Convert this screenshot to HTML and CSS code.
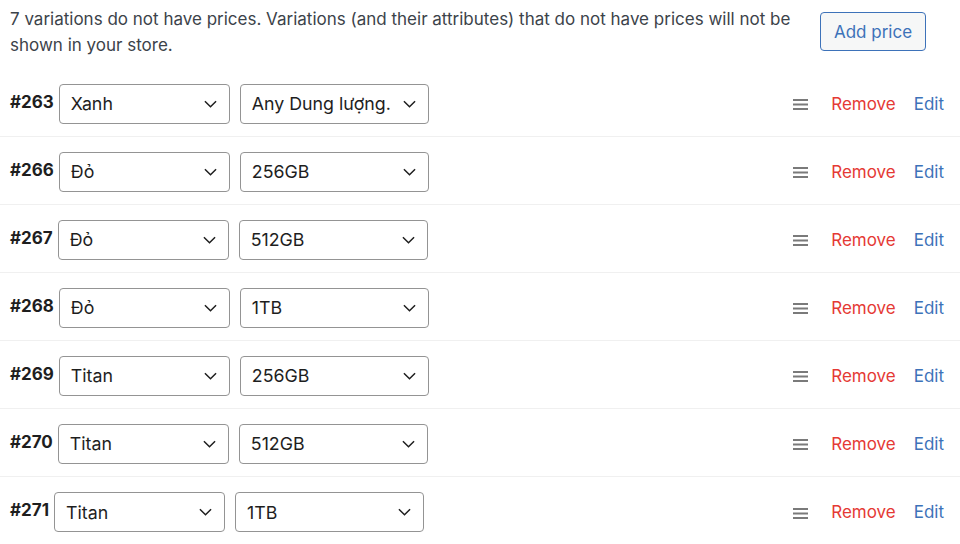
FILE: index.html
```html
<!DOCTYPE html>
<html lang="vi">
<head>
<meta charset="utf-8">
<title>Variations</title>
<link rel="stylesheet" href="styles.css">
</head>
<body>
<div class="notice">
  <p class="notice-text">7 variations do not have prices. Variations (and their attributes) that do not have prices will not be shown in your store.</p>
  <button class="btn-add">Add price</button>
</div>
<ul class="variations">
  <li class="row">
    <span class="vid">#263</span>
    <div class="select s1"><span>Xanh</span><svg viewBox="0 0 14 8" class="chev"><path d="M1 1l6 6 6-6"/></svg></div>
    <div class="select s2"><span>Any Dung lượng.</span><svg viewBox="0 0 14 8" class="chev"><path d="M1 1l6 6 6-6"/></svg></div>
    <div class="actions">
      <svg class="drag" viewBox="0 0 15 11"><rect y="0" width="15" height="2"/><rect y="4.5" width="15" height="2"/><rect y="9" width="15" height="2"/></svg>
      <a class="remove">Remove</a><a class="edit">Edit</a>
    </div>
  </li>
  <li class="row">
    <span class="vid">#266</span>
    <div class="select s1"><span>Đỏ</span><svg viewBox="0 0 14 8" class="chev"><path d="M1 1l6 6 6-6"/></svg></div>
    <div class="select s2"><span>256GB</span><svg viewBox="0 0 14 8" class="chev"><path d="M1 1l6 6 6-6"/></svg></div>
    <div class="actions">
      <svg class="drag" viewBox="0 0 15 11"><rect y="0" width="15" height="2"/><rect y="4.5" width="15" height="2"/><rect y="9" width="15" height="2"/></svg>
      <a class="remove">Remove</a><a class="edit">Edit</a>
    </div>
  </li>
  <li class="row">
    <span class="vid">#267</span>
    <div class="select s1"><span>Đỏ</span><svg viewBox="0 0 14 8" class="chev"><path d="M1 1l6 6 6-6"/></svg></div>
    <div class="select s2"><span>512GB</span><svg viewBox="0 0 14 8" class="chev"><path d="M1 1l6 6 6-6"/></svg></div>
    <div class="actions">
      <svg class="drag" viewBox="0 0 15 11"><rect y="0" width="15" height="2"/><rect y="4.5" width="15" height="2"/><rect y="9" width="15" height="2"/></svg>
      <a class="remove">Remove</a><a class="edit">Edit</a>
    </div>
  </li>
  <li class="row">
    <span class="vid">#268</span>
    <div class="select s1"><span>Đỏ</span><svg viewBox="0 0 14 8" class="chev"><path d="M1 1l6 6 6-6"/></svg></div>
    <div class="select s2"><span>1TB</span><svg viewBox="0 0 14 8" class="chev"><path d="M1 1l6 6 6-6"/></svg></div>
    <div class="actions">
      <svg class="drag" viewBox="0 0 15 11"><rect y="0" width="15" height="2"/><rect y="4.5" width="15" height="2"/><rect y="9" width="15" height="2"/></svg>
      <a class="remove">Remove</a><a class="edit">Edit</a>
    </div>
  </li>
  <li class="row">
    <span class="vid">#269</span>
    <div class="select s1"><span>Titan</span><svg viewBox="0 0 14 8" class="chev"><path d="M1 1l6 6 6-6"/></svg></div>
    <div class="select s2"><span>256GB</span><svg viewBox="0 0 14 8" class="chev"><path d="M1 1l6 6 6-6"/></svg></div>
    <div class="actions">
      <svg class="drag" viewBox="0 0 15 11"><rect y="0" width="15" height="2"/><rect y="4.5" width="15" height="2"/><rect y="9" width="15" height="2"/></svg>
      <a class="remove">Remove</a><a class="edit">Edit</a>
    </div>
  </li>
  <li class="row">
    <span class="vid">#270</span>
    <div class="select s1"><span>Titan</span><svg viewBox="0 0 14 8" class="chev"><path d="M1 1l6 6 6-6"/></svg></div>
    <div class="select s2"><span>512GB</span><svg viewBox="0 0 14 8" class="chev"><path d="M1 1l6 6 6-6"/></svg></div>
    <div class="actions">
      <svg class="drag" viewBox="0 0 15 11"><rect y="0" width="15" height="2"/><rect y="4.5" width="15" height="2"/><rect y="9" width="15" height="2"/></svg>
      <a class="remove">Remove</a><a class="edit">Edit</a>
    </div>
  </li>
  <li class="row">
    <span class="vid">#271</span>
    <div class="select s1"><span>Titan</span><svg viewBox="0 0 14 8" class="chev"><path d="M1 1l6 6 6-6"/></svg></div>
    <div class="select s2"><span>1TB</span><svg viewBox="0 0 14 8" class="chev"><path d="M1 1l6 6 6-6"/></svg></div>
    <div class="actions">
      <svg class="drag" viewBox="0 0 15 11"><rect y="0" width="15" height="2"/><rect y="4.5" width="15" height="2"/><rect y="9" width="15" height="2"/></svg>
      <a class="remove">Remove</a><a class="edit">Edit</a>
    </div>
  </li>
</ul>
</body>
</html>
```
FILE: styles.css
```css
* { box-sizing: border-box; }
html, body { margin: 0; padding: 0; background: #fff; }
body {
  font-family: Inter, "Noto Sans", "Liberation Sans", sans-serif;
  font-size: 17px;
  color: #1e1e1e;
  width: 960px;
  height: 544px;
  overflow: hidden;
}
.notice {
  display: flex;
  align-items: flex-start;
  padding: 6px 34px 10px 10px;
  height: 69px;
}
.notice-text {
  margin: 0;
  flex: 1;
  font-size: 17px;
  line-height: 26px;
  color: #3c434a;
  padding-right: 20px;
}
.btn-add {
  margin-top: 6px;
  width: 106px;
  height: 39px;
  border: 1px solid #3d72b9;
  border-radius: 4px;
  background: #f6f7f7;
  color: #3d72b9;
  font-family: inherit;
  font-size: 17px;
  padding: 0;
}
.variations { list-style: none; margin: 0; padding: 0; }
.row {
  display: flex;
  align-items: center;
  height: 68px;
  padding: 2px 16px 0 10px;
  border-bottom: 1px solid #f0f0f0;
}
.row:last-child { border-bottom: none; }
.vid {
  font-weight: 700;
  margin-right: 5px;
  margin-top: -4px;
}
.select {
  display: flex;
  align-items: center;
  justify-content: space-between;
  height: 40px;
  border: 1px solid #949494;
  border-radius: 4px;
  padding: 0 12px 0 11px;
  background: #fff;
  margin-right: 10px;
  font-size: 17.8px;
}
.s1 { width: 171px; }
.s2 { width: 189px; }
.chev {
  width: 13px;
  height: 8px;
  fill: none;
  stroke: #1e1e1e;
  stroke-width: 1.6;
  flex: none;
}
.actions {
  margin-left: auto;
  display: flex;
  align-items: center;
}
.drag {
  width: 15px;
  height: 11px;
  fill: #7a7a7a;
  margin-right: 23px;
  margin-top: 2px;
}
.remove { color: #e53935; margin-right: 18px; }
.edit { color: #3d72b9; }
```
